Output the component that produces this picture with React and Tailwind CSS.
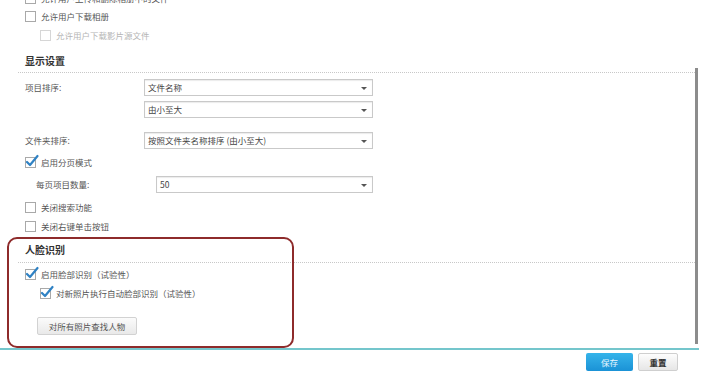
import React from 'react';

const FONT = { fontFamily: '"Noto Sans CJK SC", "Noto Sans", sans-serif' };

function Box({ checked, disabled }) {
  return (
    <span className="relative inline-block w-[11px] h-[11px] shrink-0">
      <span
        className={`block w-[11px] h-[11px] border bg-white ${disabled ? 'border-[#d6d6d6]' : 'border-[#a9a9a9]'}`}
      />
      {checked && (
        <svg className="absolute left-[0px] top-[-3px]" width="14" height="14" viewBox="0 0 14 14">
          <path d="M2 8 L5 11 L12.5 2" fill="none" stroke="#2f82c4" strokeWidth="2.2" strokeLinecap="round" strokeLinejoin="round" />
        </svg>
      )}
    </span>
  );
}

function Check({ label, checked, disabled, className = '' }) {
  return (
    <div className={`flex items-center h-[11px] ${className}`}>
      <Box checked={checked} disabled={disabled} />
      <span className={`ml-[5px] text-[8.5px] leading-none ${disabled ? 'text-[#b5b5b5]' : 'text-[#555]'}`}>
        {label}
      </span>
    </div>
  );
}

function Select({ value, className = '' }) {
  return (
    <div
      className={`relative h-[17px] border border-[#c9c9c9] bg-white shadow-[inset_0_1px_1px_rgba(0,0,0,0.08)] flex items-center pl-[3px] ${className}`}
    >
      <span className="text-[8.5px] leading-none text-[#444]">{value}</span>
      <span className="absolute right-[5px] top-[7px] w-0 h-0 border-l-[3px] border-r-[3px] border-t-[3px] border-l-transparent border-r-transparent border-t-[#555]" />
    </div>
  );
}

function Heading({ children, className = '' }) {
  return (
    <>
      <div className={`h-[14px] leading-[14px] text-[10px] font-bold text-[#333] ${className}`}>{children}</div>
    </>
  );
}

function Dotted({ className = '' }) {
  return <div className={`-ml-[7px] border-t border-dotted border-[#c8c8c8] ${className}`} />;
}

export default function App() {
  return (
    <div className="relative w-[720px] h-[373px] overflow-hidden bg-white" style={FONT}>
      <div className="flex w-[699px] h-[350px] border-b-2 border-[#74c6cc]">
        <div className="w-[695px] pl-[25px] -mt-[7px]">
          <Check label="允许用户上传和删除相册中的文件" />
          <Check label="允许用户下载相册" className="mt-[7px]" />
          <Check label="允许用户下载影片源文件" disabled className="mt-[8px] pl-[15px]" />

          <Heading className="mt-[13px]">显示设置</Heading>
          <Dotted className="mt-[4px]" />

          <div className="flex items-center mt-[6px]">
            <span className="w-[119px] text-[8.5px] text-[#555] leading-none">项目排序:</span>
            <Select value="文件名称" className="w-[229px]" />
          </div>
          <Select value="由小至大" className="w-[229px] ml-[119px] mt-[5px]" />

          <div className="flex items-center mt-[14px]">
            <span className="w-[119px] text-[8.5px] text-[#555] leading-none">文件夹排序:</span>
            <Select value="按照文件夹名称排序 (由小至大)" className="w-[229px]" />
          </div>

          <Check label="启用分页模式" checked className="mt-[8px]" />
          <div className="flex items-center mt-[8px] pl-[11px]">
            <span className="w-[120px] text-[8.5px] text-[#555] leading-none">每页项目数量:</span>
            <Select value="50" className="w-[217px]" />
          </div>

          <Check label="关闭搜索功能" className="mt-[9px]" />
          <Check label="关闭右键单击按钮" className="mt-[8px]" />

          <Heading className="mt-[11px]">人脸识别</Heading>
          <Dotted className="mt-[5px]" />

          <Check label="启用脸部识别（试验性）" checked className="mt-[6px]" />
          <Check label="对新照片执行自动脸部识别（试验性）" checked className="mt-[8px] pl-[15px]" />

          <button className="mt-[18px] ml-[12px] w-[100px] h-[18px] border border-[#d2d2d2] rounded-[2px] bg-gradient-to-b from-[#fbfbfb] to-[#e9e9e9] text-[8.5px] text-[#555] leading-none">
            对所有照片查找人物
          </button>
        </div>
        <div className="w-[3px] mt-[68px] mb-[4px] bg-[#8c8c8c]" />
      </div>

      <div className="flex justify-end gap-[5px] pr-[42px] mt-[3px]">
        <button className="w-[47px] h-[18px] rounded-[2px] bg-gradient-to-b from-[#35b4ea] to-[#1a92d6] text-[8.5px] text-[#e8f6ff] leading-none">
          保存
        </button>
        <button className="w-[40px] h-[18px] rounded-[2px] border border-[#cfcfcf] bg-gradient-to-b from-[#fdfdfd] to-[#e6e6e6] text-[8.5px] font-bold text-[#333] leading-none">
          重置
        </button>
      </div>

      <div className="absolute left-[7px] top-[237px] w-[287px] h-[111px] border-2 border-[#8e2b2b] rounded-[10px]" />
    </div>
  );
}
